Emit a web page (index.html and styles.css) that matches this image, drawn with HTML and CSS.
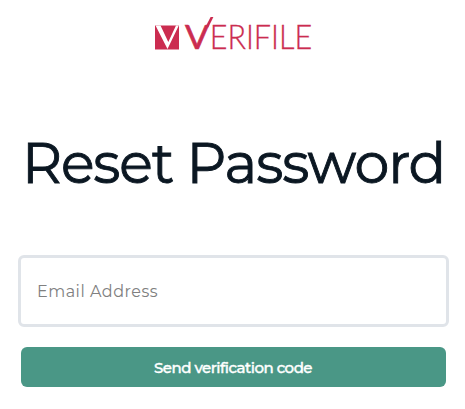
FILE: index.html
```html
<!DOCTYPE html>
<html lang="en">
<head>
  <meta charset="UTF-8">
  <meta name="viewport" content="width=device-width, initial-scale=1.0">
  <title>Reset Password</title>
  <link rel="stylesheet" href="styles.css">
</head>
<body>
  <main class="reset">
    <svg class="logo" width="170" height="44" viewBox="-5 0 170 44" role="img" aria-label="Verifile">
      <path class="logo-mark" d="M1 9.5H25V33.5H1Z"/>
      <path class="logo-tick" d="M1.5 9.5H6.5L14.3 26L22 9.5H24.8L13.5 33Z"/>
      <text class="logo-v" x="31" y="33" textLength="24" lengthAdjust="spacingAndGlyphs">V</text>
      <path class="logo-mark" d="M51.2 11.5L56.6 1H59.4L54.2 11.5Z"/>
      <text class="logo-text" x="55.7" y="33" textLength="102.5" lengthAdjust="spacingAndGlyphs">ERIFILE</text>
    </svg>

    <h1 class="title">Reset Password</h1>

    <form class="reset-form">
      <input class="email" type="email" placeholder="Email Address" aria-label="Email Address">
      <button class="send-btn" type="button">Send verification code</button>
    </form>
  </main>
</body>
</html>
```
FILE: styles.css
```css
* {
  margin: 0;
  padding: 0;
  box-sizing: border-box;
}

body {
  font-family: Montserrat, Inter, sans-serif;
  background: #fff;
  color: #0b1722;
}

.reset {
  display: flex;
  flex-direction: column;
  align-items: center;
  padding: 16px 16px 0 18px;
}

.logo {
  display: block;
}

.logo-mark {
  fill: #cb2c50;
}

.logo-tick {
  fill: #fff;
}

.logo-v,
.logo-text {
  font-family: Lato, sans-serif;
  font-size: 32.5px;
  fill: #cb2c50;
}

.logo-v {
  font-weight: 400;
  stroke: #cb2c50;
  stroke-width: 0.6px;
}

.logo-text {
  font-weight: 300;
  stroke: #cb2c50;
  stroke-width: 0.3px;
}

.title {
  height: 80px;
  margin-top: 63px;
  font-size: 55.5px;
  font-weight: 400;
  line-height: 80px;
  letter-spacing: -1.1px;
  white-space: nowrap;
  -webkit-text-stroke: 0.9px #0b1722;
}

.reset-form {
  display: flex;
  flex-direction: column;
  width: 100%;
  margin-top: 52px;
}

.email {
  height: 72px;
  padding: 0 16px;
  border: 3px solid #e0e4e9;
  border-radius: 6px;
  outline: none;
  font-family: inherit;
  font-size: 16px;
  letter-spacing: 0.5px;
}

.email::placeholder {
  color: #808080;
}

.send-btn {
  height: 40px;
  margin: 20px 3px 0;
  padding-right: 1px;
  border: none;
  border-radius: 6px;
  background: #4a9786;
  color: #fff;
  font-family: inherit;
  font-size: 15px;
  font-weight: 500;
  letter-spacing: -0.5px;
  -webkit-text-stroke: 0.4px #fff;
  cursor: pointer;
}
```
